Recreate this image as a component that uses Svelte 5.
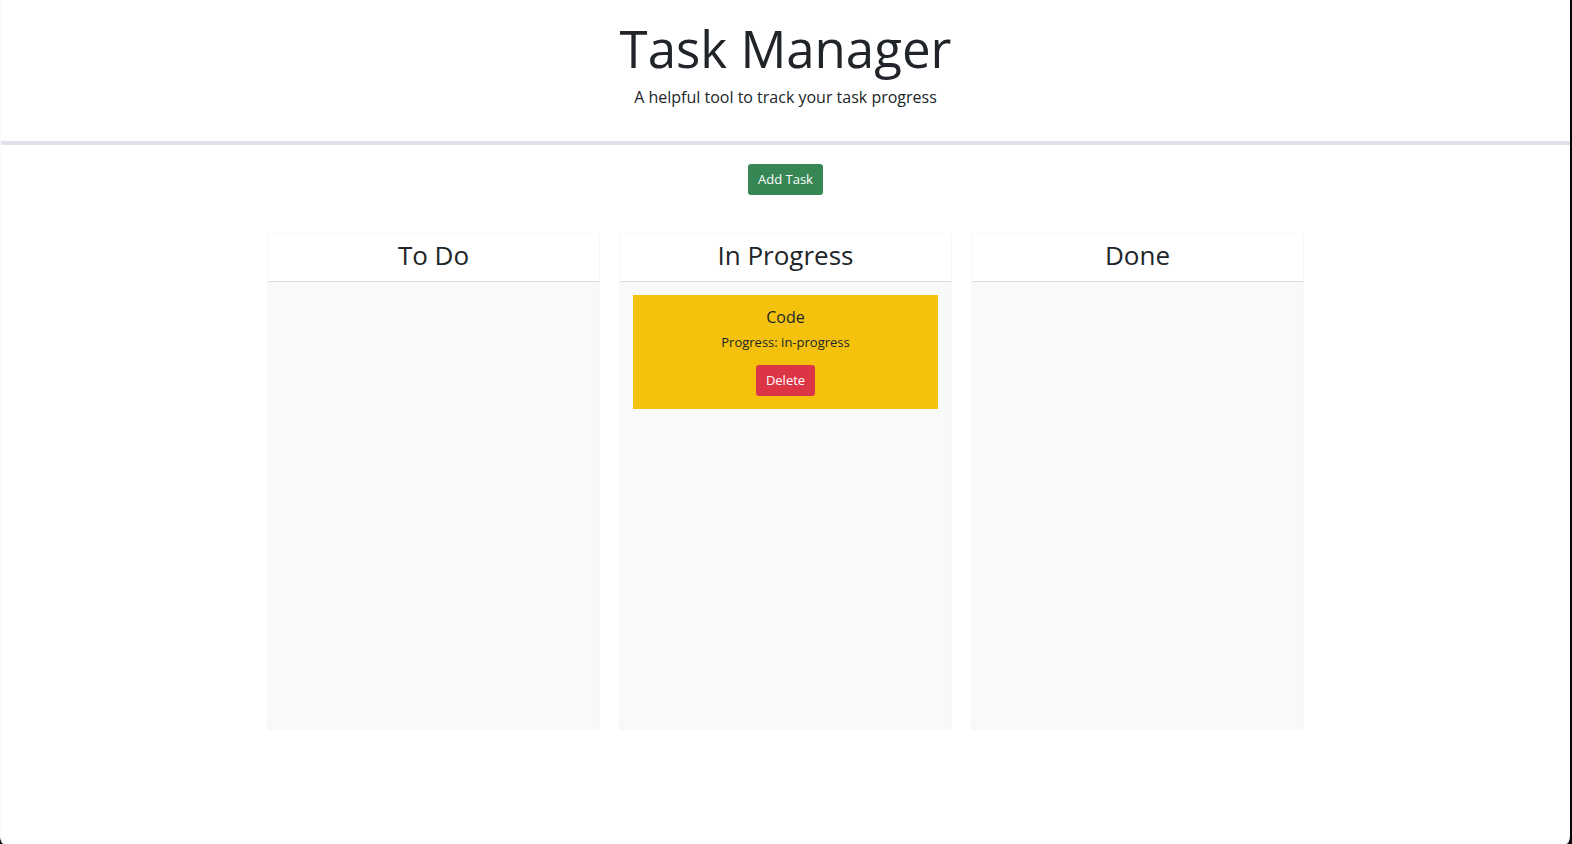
<script>
  let tasks = $state([{ id: 1, name: 'Code', progress: 'in-progress' }]);

  const lanes = [
    { title: 'To Do', progress: 'to-do' },
    { title: 'In Progress', progress: 'in-progress' },
    { title: 'Done', progress: 'done' }
  ];

  function addTask() {
    tasks.push({ id: Date.now(), name: 'New task', progress: 'to-do' });
  }

  function deleteTask(id) {
    tasks = tasks.filter((task) => task.id !== id);
  }
</script>

<div class="window">
  <div class="page">
    <header>
      <h1>Task Manager</h1>
      <p>A helpful tool to track your task progress</p>
    </header>

    <main>
      <button class="btn add" type="button" onclick={addTask}>Add Task</button>

      <div class="board">
        {#each lanes as lane (lane.progress)}
          <section class="lane">
            <h2>{lane.title}</h2>
            <div class="cards">
              {#each tasks.filter((task) => task.progress === lane.progress) as task (task.id)}
                <article class="card">
                  <h3>{task.name}</h3>
                  <p>Progress: {task.progress}</p>
                  <button class="btn delete" type="button" onclick={() => deleteTask(task.id)}>Delete</button>
                </article>
              {/each}
            </div>
          </section>
        {/each}
      </div>
    </main>
  </div>
</div>

<style>
  :global(body) {
    margin: 0;
    background: #05070b;
  }

  .window,
  .window * {
    box-sizing: border-box;
  }

  .window {
    min-height: 100vh;
    display: flex;
    padding: 0 2px 0 0;
    font-family: 'Open Sans', 'Noto Sans', sans-serif;
    color: #212529;
  }

  .page {
    flex: 1;
    border-left: 1px solid #fafafa;
    border-radius: 0 0 4px 4px / 0 0 8px 8px;
    background: #fff;
    text-align: center;
  }

  header {
    padding: 16px 0 32px;
    border-bottom: 4px solid #dfe1e8;
  }

  h1,
  h2,
  h3,
  p {
    margin: 0;
    font-weight: 400;
  }

  h1 {
    font-size: 51px;
    line-height: 64px;
    margin-bottom: 5px;
  }

  header p {
    font-size: 16px;
    line-height: 24px;
  }

  main {
    display: flex;
    flex-direction: column;
    align-items: center;
    padding: 19px 16px;
  }

  .btn {
    height: 31px;
    padding: 0 10px 2px;
    border: 0;
    border-radius: 3px;
    color: #fff;
    font-family: inherit;
    font-size: 13px;
    font-weight: 500;
    line-height: 20px;
    cursor: pointer;
  }

  .add {
    background: #368754;
  }

  .delete {
    background: #dc3546;
  }

  .board {
    display: grid;
    grid-template-columns: repeat(3, 1fr);
    gap: 19px;
    width: 100%;
    max-width: 1037px;
    margin-top: 38px;
  }

  .lane {
    min-height: 497px;
    border: 1px solid #f6f7f9;
    border-radius: 3px;
    background: #f8f9fb;
  }

  h2 {
    padding: 5px 12px 10px;
    border-bottom: 1px solid #dcdcdd;
    border-radius: 3px 3px 0 0;
    background: #fff;
    font-size: 26px;
    line-height: 32px;
  }

  .cards {
    display: grid;
    gap: 12px;
    padding: 13px;
  }

  .card {
    padding: 12px 13px 13px;
    background: #f4c20d;
  }

  h3 {
    font-size: 16px;
    line-height: 20px;
    margin-bottom: 5px;
  }

  .card p {
    font-size: 13px;
    line-height: 20px;
    margin-bottom: 13px;
  }
</style>
